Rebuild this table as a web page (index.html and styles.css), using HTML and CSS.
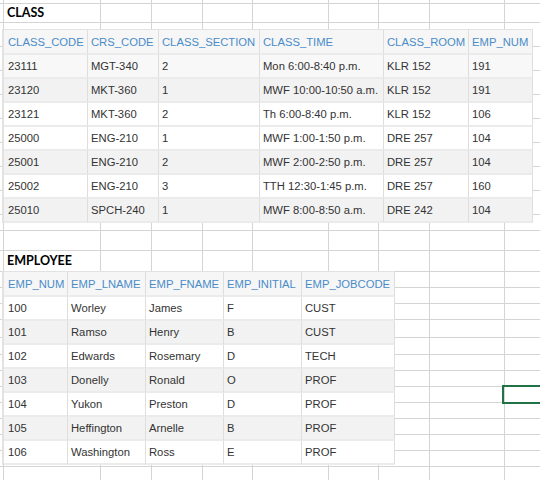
FILE: index.html
```html
<!DOCTYPE html>
<html>
<head>
<meta charset="utf-8">
<link rel="stylesheet" href="styles.css">
</head>
<body>
<div class="sheet">
  <div class="cols">
    <div class="c0"></div><div class="c1"></div><div class="c2"></div><div class="c3"></div><div class="c4"></div><div class="c5"></div><div class="c6"></div><div class="c7"></div><div class="c8"></div><div class="c9"></div>
  </div>
  <div class="rows">
    <div class="r3"></div><div class="r19"></div>
    <div class="r24"></div><div class="r24"></div><div class="r24"></div><div class="r24"></div><div class="r24"></div><div class="r24"></div><div class="r24"></div><div class="r24"></div>
    <div class="r16"></div><div class="r20"></div><div class="r21"></div>
    <div class="r16"></div><div class="r16"></div><div class="r16"></div><div class="r18"></div><div class="r17"></div><div class="r16"></div><div class="r16"></div><div class="r16"></div><div class="r16"></div><div class="r16"></div><div class="r16"></div><div class="r16"></div><div class="r16"></div>
  </div>

  <div class="content">
    <div class="title">CLASS</div>
    <table class="data t-class">
      <colgroup><col class="w84"><col class="w71"><col class="w101"><col class="w124"><col class="w85"><col class="w64"></colgroup>
      <tr class="head"><th>CLASS_CODE</th><th>CRS_CODE</th><th>CLASS_SECTION</th><th>CLASS_TIME</th><th>CLASS_ROOM</th><th>EMP_NUM</th></tr>
      <tr class="soft"><td>23111</td><td>MGT-340</td><td>2</td><td>Mon 6:00-8:40 p.m.</td><td>KLR 152</td><td>191</td></tr>
      <tr class="grey"><td>23120</td><td>MKT-360</td><td>1</td><td>MWF 10:00-10:50 a.m.</td><td>KLR 152</td><td>191</td></tr>
      <tr><td>23121</td><td>MKT-360</td><td>2</td><td>Th 6:00-8:40 p.m.</td><td>KLR 152</td><td>106</td></tr>
      <tr><td>25000</td><td>ENG-210</td><td>1</td><td>MWF 1:00-1:50 p.m.</td><td>DRE 257</td><td>104</td></tr>
      <tr class="grey"><td>25001</td><td>ENG-210</td><td>2</td><td>MWF 2:00-2:50 p.m.</td><td>DRE 257</td><td>104</td></tr>
      <tr><td>25002</td><td>ENG-210</td><td>3</td><td>TTH 12:30-1:45 p.m.</td><td>DRE 257</td><td>160</td></tr>
      <tr class="grey"><td>25010</td><td>SPCH-240</td><td>1</td><td>MWF 8:00-8:50 a.m.</td><td>DRE 242</td><td>104</td></tr>
    </table>

    <div class="title title-2">EMPLOYEE</div>
    <table class="data t-emp">
      <colgroup><col class="w64"><col class="w78"><col class="w78"><col class="w78"><col class="w93"></colgroup>
      <tr class="head"><th>EMP_NUM</th><th>EMP_LNAME</th><th>EMP_FNAME</th><th>EMP_INITIAL</th><th>EMP_JOBCODE</th></tr>
      <tr><td>100</td><td>Worley</td><td>James</td><td>F</td><td>CUST</td></tr>
      <tr class="grey"><td>101</td><td>Ramso</td><td>Henry</td><td>B</td><td>CUST</td></tr>
      <tr><td>102</td><td>Edwards</td><td>Rosemary</td><td>D</td><td>TECH</td></tr>
      <tr class="grey"><td>103</td><td>Donelly</td><td>Ronald</td><td>O</td><td>PROF</td></tr>
      <tr><td>104</td><td>Yukon</td><td>Preston</td><td>D</td><td>PROF</td></tr>
      <tr class="grey"><td>105</td><td>Heffington</td><td>Arnelle</td><td>B</td><td>PROF</td></tr>
      <tr><td>106</td><td>Washington</td><td>Ross</td><td>E</td><td>PROF</td></tr>
    </table>
  </div>

  <div class="selected"></div>
</div>
</body>
</html>
```

FILE: styles.css
```css
* { box-sizing: border-box; }
html, body { margin: 0; padding: 0; background: #ffffff; }

.sheet {
  position: relative;
  width: 540px;
  height: 480px;
  overflow: hidden;
  background: #ffffff;
}

/* spreadsheet gridlines (background layers) */
.cols, .rows {
  position: absolute;
  top: 0; left: 0; right: 0; bottom: 0;
  display: flex;
}
.rows { flex-direction: column; }
.cols div { flex: none; border-right: 1px solid #d4d4d4; }
.rows div { flex: none; border-bottom: 1px solid #d4d4d4; }

.c0 { width: 4px; }
.c1 { width: 97px; }
.c2 { width: 51px; }
.c3 { width: 51px; }
.c4 { width: 50px; }
.c5 { width: 76px; }
.c6 { width: 50px; }
.c7 { width: 51px; }
.c8 { width: 75px; }
.c9 { width: 60px; }

.r3 { height: 4px; }
.r16 { height: 16px; }
.r17 { height: 17px; }
.r18 { height: 18px; }
.r19 { height: 19px; }
.r20 { height: 20px; }
.r21 { height: 21px; }
.r24 { height: 24px; }

/* content */
.content {
  position: relative;
  display: flex;
  flex-direction: column;
  align-items: flex-start;
  padding-left: 2px;
}

.title {
  margin-top: 4px;
  height: 18px;
  padding-left: 5px;
  font-family: Lato, "Open Sans", sans-serif;
  font-weight: 700;
  font-size: 12.5px;
  line-height: 18px;
  color: #000000;
}
.title-2 {
  margin-top: 28px;
  height: 20px;
  line-height: 20px;
}

.data {
  border-collapse: separate;
  border-spacing: 0;
  table-layout: fixed;
  font-family: "Liberation Sans", Arial, sans-serif;
  font-size: 11.25px;
  color: #333333;
  background: #ffffff;
  border-top: 1px solid #e2e2e2;
  border-left: 2px solid #e2e2e2;
}
.t-class { margin-top: 7px; width: 531px; }
.t-emp { margin-top: 0; width: 393px; }

.w64 { width: 64px; }
.w71 { width: 71px; }
.w78 { width: 78px; }
.w84 { width: 84px; }
.w85 { width: 85px; }
.w93 { width: 93px; }
.w101 { width: 101px; }
.w124 { width: 124px; }

.data th, .data td {
  height: 24px;
  padding: 0 1px 0 3px;
  text-align: left;
  white-space: nowrap;
  overflow: hidden;
  border-right: 1px solid #dedede;
  border-bottom: 2px solid #ebebeb;
  vertical-align: middle;
}
.data th:first-child, .data td:first-child { padding-left: 4px; }
.data th {
  font-weight: 400;
  color: #4a8cc9;
  background: #f6f6f6;
  height: 25px;
}
.data tr.grey td { background: #f2f2f2; }
.data tr.soft td { background: #f8f8f8; }

/* active cell */
.selected {
  position: absolute;
  left: 502px;
  top: 385px;
  width: 50px;
  height: 19px;
  border: 2px solid #217346;
}
```
